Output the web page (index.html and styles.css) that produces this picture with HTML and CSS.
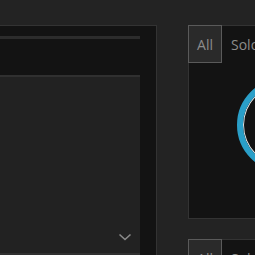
FILE: index.html
```html
<!DOCTYPE html>
<html>
<head>
<meta charset="utf-8">
<link rel="stylesheet" href="styles.css">
</head>
<body>
<div class="page">
  <section class="left">
    <div class="inner">
      <div class="bar"></div>
      <div class="head"></div>
      <div class="editor">
        <svg class="chev" width="14" height="8" viewBox="0 0 14 8"><path d="M1.5 1.5 L7 6.5 L12.5 1.5" fill="none" stroke="#8a8a8a" stroke-width="1.6"/></svg>
      </div>
    </div>
  </section>
  <section class="right">
    <div class="tabs">
      <div class="tab active">All</div>
      <div class="tab">Solo</div>
    </div>
    <div class="body">
      <div class="ring"></div>
    </div>
    <div class="tabs second">
      <div class="tab active">All</div>
      <div class="tab">Solo</div>
    </div>
  </section>
</div>
</body>
</html>
```
FILE: styles.css
```css
html, body {
  margin: 0;
  padding: 0;
  background: #232323;
  overflow: hidden;
  font-family: "Open Sans", "Liberation Sans", sans-serif;
}
.page {
  display: flex;
  gap: 31px;
  padding-top: 25px;
  margin-left: -100px;
  width: 500px;
}
.left {
  width: 257px;
  height: 260px;
  flex: none;
  background: #131313;
  border-top: 1px solid #333;
  border-right: 1px solid #333;
  box-sizing: border-box;
  padding-right: 16px;
  padding-top: 10px;
}
.inner {
  display: flex;
  flex-direction: column;
}
.bar {
  height: 3px;
  background: #2c2c2c;
}
.head {
  height: 36px;
}
.editor {
  height: 176px;
  background: #222;
  border-top: 2px solid #303030;
  border-bottom: 2px solid #303030;
  position: relative;
}
.chev {
  position: absolute;
  right: 8px;
  bottom: 12px;
}
.right {
  width: 200px;
  flex: none;
}
.tabs {
  display: flex;
  height: 38px;
  background: #131313;
}
.tab {
  height: 38px;
  box-sizing: border-box;
  padding: 0 9px;
  line-height: 38px;
  font-size: 14px;
  color: #8c8c8c;
  border-top: 1px solid #333;
}
.tab.active {
  width: 34px;
  padding: 0;
  line-height: 37px;
  text-align: center;
  background: #2a2a2a;
  border: 1px solid #5a5a5a;
}
.body {
  height: 156px;
  background: #131313;
  border: 1px solid #333;
  border-top: none;
  box-sizing: border-box;
  position: relative;
  overflow: hidden;
}
.ring {
  position: absolute;
  left: 48px;
  top: 15px;
  width: 82px;
  height: 82px;
  border: 6px solid #2a9fc8;
  border-radius: 50%;
  box-shadow: inset 0 0 0 1px #e6e6e6;
}
.second {
  margin-top: 20px;
}
```
